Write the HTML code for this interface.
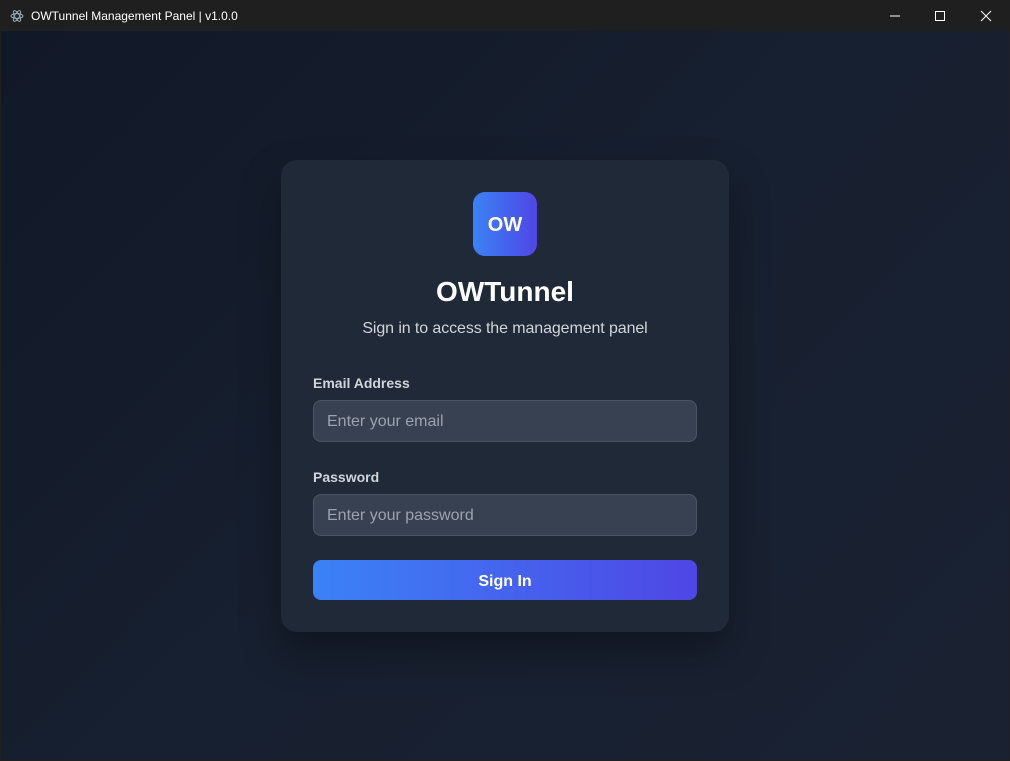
<!DOCTYPE html>
<html><head><style>
*{margin:0;padding:0;box-sizing:border-box}
body{width:1010px;height:761px;overflow:hidden;font-family:"Liberation Sans",sans-serif;background:#202020;position:relative}
.tb{position:absolute;left:0;top:0;width:1010px;height:31px;background:#1f1f1f;color:#fff;font-size:12px}
.tb .t{position:absolute;left:31px;top:9px}
.main{position:absolute;left:1px;top:31px;width:1008px;height:729px;background:linear-gradient(135deg,#111827 0%,#172030 50%,#1a2232 100%)}
.card{position:absolute;left:280px;top:129px;width:448px;height:472px;background:#1f2937;border-radius:16px;box-shadow:0 20px 40px rgba(0,0,0,.35)}
.logo{position:absolute;left:192px;top:32px;width:64px;height:64px;border-radius:12px;background:linear-gradient(90deg,#3b82f6,#4f46e5);color:#fff;font-weight:bold;font-size:20px;text-align:center;line-height:66px}
h1{position:absolute;left:0;width:448px;top:116px;text-align:center;color:#fff;font-size:28px}
.sub{position:absolute;left:0;width:448px;top:160px;text-align:center;color:#d1d5db;font-size:16px;letter-spacing:-0.1px}
.lbl{position:absolute;left:32px;color:#d1d5db;font-size:14px;font-weight:bold}
.in{position:absolute;left:32px;width:384px;height:42px;background:#374151;border:1px solid #4b5563;border-radius:8px;color:#9ca3af;font-size:16px;padding-left:13px;line-height:42px}
.btn{position:absolute;left:32px;top:400px;width:384px;height:40px;border-radius:8px;background:linear-gradient(90deg,#3b82f6,#4f46e5);color:#fff;font-weight:bold;font-size:16px;text-align:center;line-height:43px}
</style></head><body>
<div class="tb">
<svg style="position:absolute;left:10px;top:9px" width="14" height="14" viewBox="0 0 14 14" fill="none" stroke="#9ab" stroke-width="1"><ellipse cx="7" cy="7" rx="6" ry="2.4"/><ellipse cx="7" cy="7" rx="6" ry="2.4" transform="rotate(60 7 7)"/><ellipse cx="7" cy="7" rx="6" ry="2.4" transform="rotate(120 7 7)"/></svg>
<span class="t">OWTunnel Management Panel | v1.0.0</span>
<svg style="position:absolute;left:889px;top:10px" width="12" height="12"><line x1="1" y1="6" x2="11" y2="6" stroke="#fff"/></svg>
<svg style="position:absolute;left:934px;top:10px" width="12" height="12"><rect x="1.5" y="1.5" width="9" height="9" fill="none" stroke="#fff"/></svg>
<svg style="position:absolute;left:980px;top:10px" width="12" height="12"><path d="M1 1L11 11M11 1L1 11" stroke="#fff"/></svg>
</div>
<div class="main">
<div class="card">
<div class="logo">OW</div>
<h1>OWTunnel</h1>
<div class="sub">Sign in to access the management panel</div>
<div class="lbl" style="top:215px">Email Address</div>
<div class="in" style="top:240px">Enter your email</div>
<div class="lbl" style="top:309px">Password</div>
<div class="in" style="top:334px">Enter your password</div>
<div class="btn">Sign In</div>
</div>
</div>
</body></html>
